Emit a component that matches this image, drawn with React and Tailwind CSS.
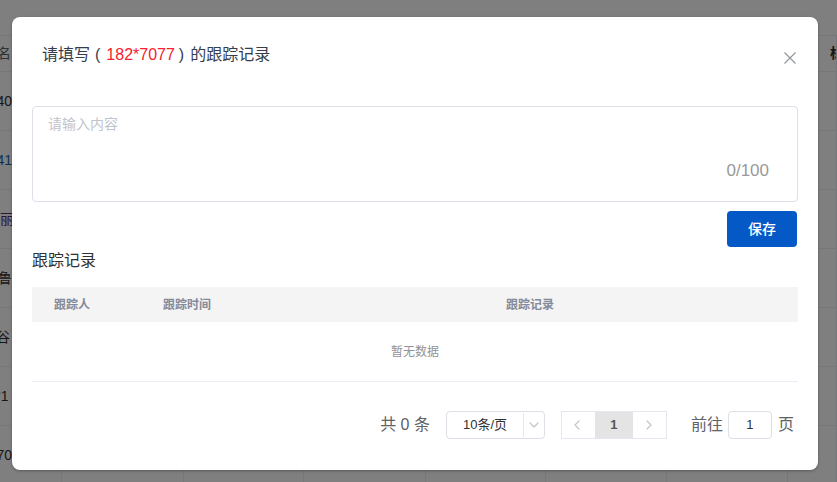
import React from "react";

const FONT = { fontFamily: '"Liberation Sans", "Noto Sans CJK SC", sans-serif' };

const bgRows = [
  { t: "7140", ml: "-ml-[19px]", c: "text-[#303133]" },
  { t: "7141", ml: "-ml-[19px]", c: "text-[#1f5fa8]" },
  { t: "娟丽", ml: "-ml-[14px]", c: "text-[#5a2a6a]" },
  { t: "晓鲁", ml: "-ml-[16px]", c: "text-[#303133]" },
  { t: "谷", ml: "-ml-[4px]", c: "text-[#303133]" },
  { t: "182*1", ml: "-ml-[28px]", c: "text-[#303133]" },
  { t: "1870", ml: "-ml-[19px]", c: "text-[#303133]" },
];

const colW = ["w-[62px]", "w-[122px]", "w-[120px]", "w-[122px]", "w-[120px]", "w-[121px]", "w-[121px]", "flex-1"];

function BgCells({ first, last, header }) {
  return (
    <>
      {colW.map((w, i) => (
        <div
          key={i}
          className={`${w} shrink-0 h-full flex items-center overflow-hidden border-r border-[#ebeef5] ${header ? "text-[#606266]" : ""}`}
        >
          {i === 0 ? first : null}
          {i === colW.length - 1 ? last : null}
        </div>
      ))}
    </>
  );
}

function Chevron({ dir }) {
  const d = dir === "left" ? "M7 2 L3 6 L7 10" : dir === "right" ? "M4 2 L8 6 L4 10" : "M2 4 L6 8 L10 4";
  return (
    <svg width="12" height="12" viewBox="0 0 12 12" fill="none">
      <path d={d} stroke="#c0c4cc" strokeWidth="1.2" strokeLinecap="round" strokeLinejoin="round" />
    </svg>
  );
}

export default function App() {
  return (
    <div className="relative w-[837px] h-[482px] overflow-hidden bg-white text-[14px]" style={FONT}>
      {/* background page */}
      <div className="flex flex-col">
        <div className="h-[36px] border-b border-[#ebeef5]" />
        <div className="h-[36px] flex border-b border-[#ebeef5]">
          <BgCells
            header
            first={<span className="whitespace-nowrap -ml-[17px] text-[#606266]">姓名</span>}
            last={<span className="whitespace-nowrap pl-[42px] font-bold text-[#303133]">标签</span>}
          />
        </div>
        {bgRows.map((r, i) => (
          <div key={i} className="h-[59px] flex border-b border-[#ebeef5]">
            <BgCells first={<span className={`whitespace-nowrap ${r.ml} ${r.c}`}>{r.t}</span>} last={null} />
          </div>
        ))}
      </div>

      {/* overlay */}
      <div className="absolute inset-0 bg-black/50" />

      {/* dialog */}
      <div className="absolute left-[12px] top-[17px] w-[806px] h-[453px] bg-white rounded-[8px] shadow-[0_1px_3px_rgba(0,0,0,0.3)] flex flex-col">
        <div className="relative pl-[30px] pt-[28px]">
          <div className="text-[16px] leading-[20px] text-[#363d4b] whitespace-nowrap">
            <span>请填写</span><span className="ml-[5px]">(</span><span className="ml-[6px] text-[#f5222d]">182*7077</span><span className="ml-[4px]">)</span><span className="ml-[6px]">的跟踪记录</span>
          </div>
          <button className="absolute right-[22px] top-[35px] w-[12px] h-[12px]">
            <svg width="12" height="12" viewBox="0 0 12 12" fill="none">
              <path d="M0.5 0.5 L11.5 11.5 M11.5 0.5 L0.5 11.5" stroke="#909399" strokeWidth="1.1" />
            </svg>
          </button>
        </div>

        <div className="mx-[20px] mt-[41px] relative h-[96px] border border-[#dcdfe6] rounded-[4px]">
          <div className="pl-[15px] pt-[7px] text-[14px] leading-[20px] text-[#c0c4cc]">请输入内容</div>
          <div className="absolute right-[28px] bottom-[21px] text-[17px] leading-[18px] text-[#999999]">0/100</div>
        </div>

        <div className="mx-[20px] mt-[9px] flex justify-end">
          <button className="w-[70px] h-[36px] mr-[1px] rounded-[4px] bg-[#0559c7] text-white text-[14px] leading-[20px] font-medium">
            保存
          </button>
        </div>

        <div className="mx-[20px] mt-[4px] text-[16px] leading-[20px] text-[#303133]">跟踪记录</div>

        <div className="mx-[20px] mt-[16px]">
          <div className="h-[35px] bg-[#f4f4f5] flex items-center text-[12px] font-bold text-[#848b98]">
            <div className="w-[80px] text-center">跟踪人</div>
            <div className="w-[150px] text-center">跟踪时间</div>
            <div className="flex-1 text-center">跟踪记录</div>
          </div>
          <div className="h-[60px] border-b border-[#ebeef5] flex items-center justify-center text-[12px] text-[#909399]">
            暂无数据
          </div>
        </div>

        <div className="mx-[20px] mt-[29px] pr-[4px] flex justify-end items-center h-[28px] text-[#606266]">
          <span className="text-[16px] leading-[20px] whitespace-nowrap">共 0 条</span>
          <div className="ml-[16px] w-[99px] h-[28px] border border-[#dcdfe6] rounded-[4px] flex items-center">
            <div className="w-[76px] text-center text-[13px] text-[#303133]">10条/页</div>
            <div className="h-[24px] w-px bg-[#e4e7ed]" />
            <div className="flex-1 flex items-center justify-center">
              <Chevron dir="down" />
            </div>
          </div>
          <div className="ml-[16px] h-[28px] flex border border-[#e4e7ed]">
            <div className="w-[33px] flex items-center justify-center">
              <Chevron dir="left" />
            </div>
            <div className="w-[38px] bg-[#e4e4e4] flex items-center justify-center text-[13px] font-bold text-[#555555]">1</div>
            <div className="w-[33px] flex items-center justify-center">
              <Chevron dir="right" />
            </div>
          </div>
          <span className="ml-[24px] text-[16px] leading-[20px] whitespace-nowrap">前往</span>
          <div className="ml-[5px] w-[44px] h-[28px] border border-[#dcdfe6] rounded-[4px] flex items-center justify-center text-[13px] text-[#303133]">
            1
          </div>
          <span className="ml-[6px] text-[16px] leading-[20px]">页</span>
        </div>
      </div>
    </div>
  );
}
